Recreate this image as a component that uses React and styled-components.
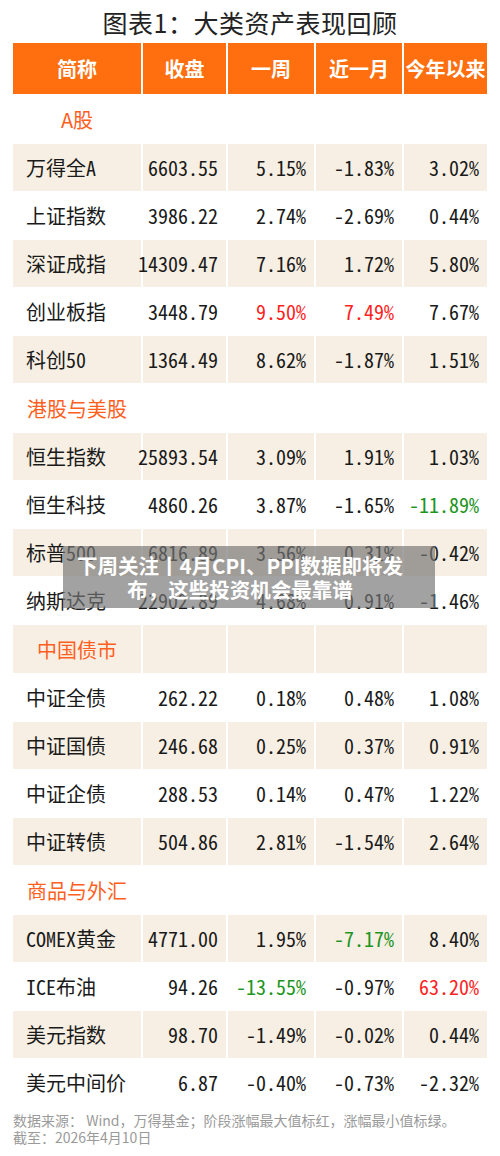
import React from 'react';
import styled, { createGlobalStyle } from 'styled-components';

const GlobalStyle = createGlobalStyle`
  html, body {
    margin: 0;
    padding: 0;
    background: #ffffff;
  }
  body {
    font-family: "Noto Sans CJK SC", "Noto Sans", sans-serif;
    color: #1a1a1a;
  }
`;

// Layout
const Page = styled.div`
  position: relative;
  width: 500px;
  padding: 0 13px;
  box-sizing: border-box;
`;

const Title = styled.h1`
  margin: 0;
  height: 43px;
  line-height: 44px;
  text-align: center;
  font-size: 25px;
  font-weight: 400;
  color: #222;
  letter-spacing: 0.5px;
`;

const Table = styled.div`
  display: grid;
  grid-template-columns: 128px 83px 86px 86px 83px;
  column-gap: 2px;
  row-gap: 1px;
`;

const HeadCell = styled.div`
  height: 51px;
  background: #ff6f0f;
  color: #fff;
  font-size: 20px;
  font-weight: 700;
  display: flex;
  align-items: center;
  justify-content: center;
  white-space: nowrap;
`;

const Cell = styled.div`
  height: ${(p) => (p.$section ? 48 : 47)}px;
  background: ${(p) => (p.$shaded ? '#f7efe3' : '#ffffff')};
  display: flex;
  align-items: center;
  justify-content: ${(p) => (p.$align === 'center' ? 'center' : p.$align === 'left' ? 'flex-start' : 'flex-end')};
  padding: ${(p) => (p.$align === 'left' ? '0 0 0 13px' : p.$align === 'right' ? '0 8px 0 0' : '0')};
  white-space: nowrap;
  font-size: 20px;
`;

const Name = styled.span`
  color: #1a1a1a;
  font-feature-settings: "hwid";
`;

const SectionName = styled.span`
  color: #ff5f1e;
`;

const Num = styled.span`
  font-feature-settings: "hwid";
  color: ${(p) => (p.$tone === 'up' ? '#ff1f1f' : p.$tone === 'down' ? '#1e951e' : '#1a1a1a')};
`;

const Footer = styled.div`
  padding-top: 6px;
  font-size: 14px;
  line-height: 17px;
  color: #9a9a9a;
`;

const Overlay = styled.div`
  position: absolute;
  left: 63px;
  top: 546px;
  width: 372px;
  height: 62px;
  background: rgba(118, 118, 118, 0.68);
  color: #fff;
  font-size: 20.5px;
  font-weight: 700;
  line-height: 24px;
  text-align: center;
  padding: 7px 20px 0 2px;
  box-sizing: border-box;
`;

const headers = ['简称', '收盘', '一周', '近一月', '今年以来'];

// tone: u = red (max), d = green (min)
const sections = [
  {
    name: 'A股',
    rows: [
      ['万得全A', '6603.55', '5.15%', '-1.83%', '3.02%'],
      ['上证指数', '3986.22', '2.74%', '-2.69%', '0.44%'],
      ['深证成指', '14309.47', '7.16%', '1.72%', '5.80%'],
      ['创业板指', '3448.79', '9.50%|u', '7.49%|u', '7.67%'],
      ['科创50', '1364.49', '8.62%', '-1.87%', '1.51%'],
    ],
  },
  {
    name: '港股与美股',
    rows: [
      ['恒生指数', '25893.54', '3.09%', '1.91%', '1.03%'],
      ['恒生科技', '4860.26', '3.87%', '-1.65%', '-11.89%|d'],
      ['标普500', '6816.89', '3.56%', '0.31%', '-0.42%'],
      ['纳斯达克', '22902.89', '4.68%', '0.91%', '-1.46%'],
    ],
  },
  {
    name: '中国债市',
    rows: [
      ['中证全债', '262.22', '0.18%', '0.48%', '1.08%'],
      ['中证国债', '246.68', '0.25%', '0.37%', '0.91%'],
      ['中证企债', '288.53', '0.14%', '0.47%', '1.22%'],
      ['中证转债', '504.86', '2.81%', '-1.54%', '2.64%'],
    ],
  },
  {
    name: '商品与外汇',
    rows: [
      ['COMEX黄金', '4771.00', '1.95%', '-7.17%|d', '8.40%'],
      ['ICE布油', '94.26', '-13.55%|d', '-0.97%', '63.20%|u'],
      ['美元指数', '98.70', '-1.49%', '-0.02%', '0.44%'],
      ['美元中间价', '6.87', '-0.40%', '-0.73%', '-2.32%'],
    ],
  },
];

const toneOf = (flag) => (flag === 'u' ? 'up' : flag === 'd' ? 'down' : null);

const App = () => {
  let index = 0;
  const cells = [];

  sections.forEach((section) => {
    const shaded = index % 2 === 1;
    index += 1;
    cells.push(
      <Cell key={section.name} $section $shaded={shaded} $align="center">
        <SectionName>{section.name}</SectionName>
      </Cell>
    );
    for (let i = 1; i < 5; i++) {
      cells.push(<Cell key={`${section.name}-${i}`} $section $shaded={shaded} />);
    }

    section.rows.forEach((row) => {
      const rowShaded = index % 2 === 1;
      index += 1;
      cells.push(
        <Cell key={row[0]} $shaded={rowShaded} $align="left">
          <Name>{row[0]}</Name>
        </Cell>
      );
      row.slice(1).forEach((value, i) => {
        const [text, flag] = value.split('|');
        cells.push(
          <Cell key={`${row[0]}-${i}`} $shaded={rowShaded} $align="right">
            <Num $tone={toneOf(flag)}>{text}</Num>
          </Cell>
        );
      });
    });
  });

  return (
    <>
      <GlobalStyle />
      <Page>
        <Title>图表1：大类资产表现回顾</Title>
        <Table>
          {headers.map((h) => (
            <HeadCell key={h}>{h}</HeadCell>
          ))}
          {cells}
        </Table>
        <Footer>
          数据来源： Wind，万得基金；阶段涨幅最大值标红，涨幅最小值标绿。
          <br />
          截至：2026年4月10日
        </Footer>
        <Overlay>下周关注丨4月CPI、PPI数据即将发布，这些投资机会最靠谱</Overlay>
      </Page>
    </>
  );
};

export default App;
